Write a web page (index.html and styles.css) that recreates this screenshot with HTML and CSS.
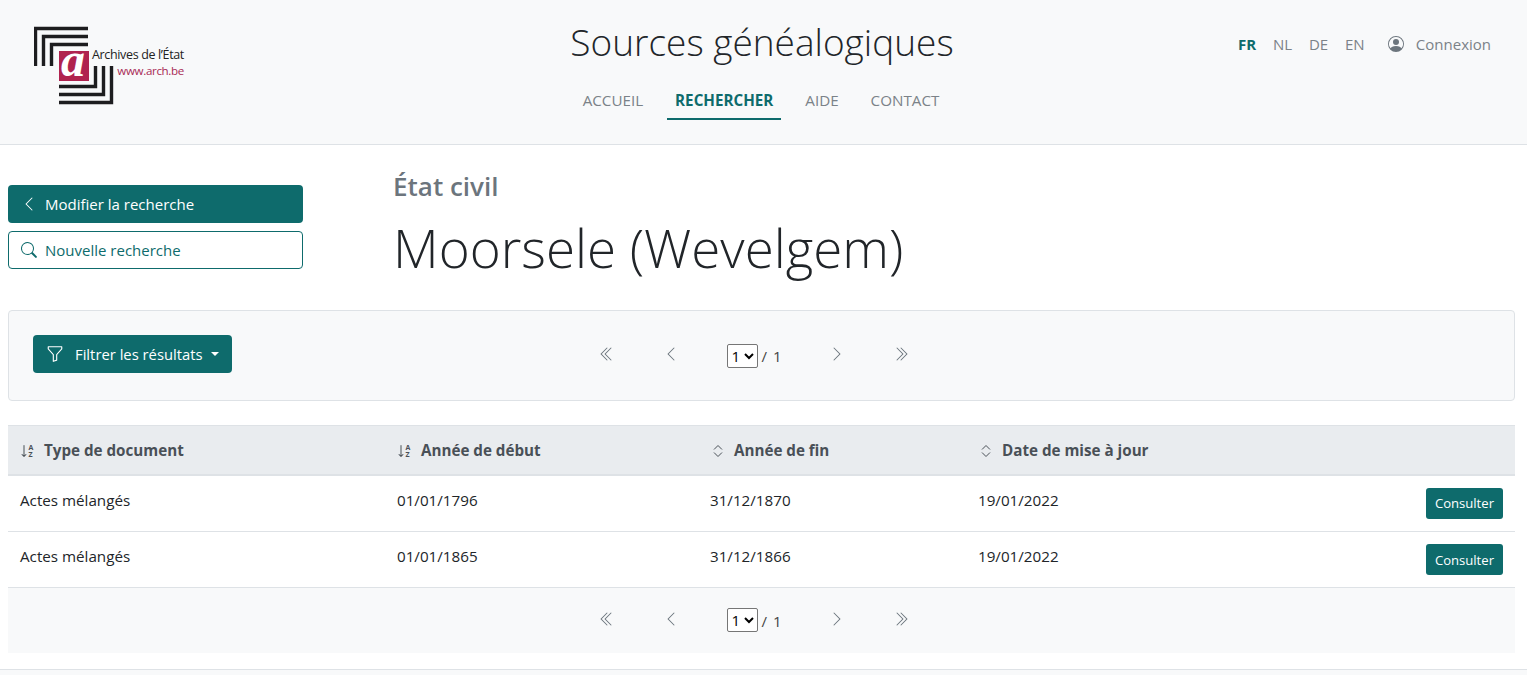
FILE: index.html
```html
<!DOCTYPE html>
<html lang="fr">
<head>
<meta charset="utf-8">
<title>Sources généalogiques</title>
<link rel="stylesheet" href="styles.css">
</head>
<body>
<header class="site-header">
  <div class="logo">
    <svg class="logo-mark" width="90" height="80" viewBox="0 0 90 80">
      <g fill="none" stroke="#1d1d1f" stroke-width="3.4">
        <path d="M1.5 40V2.5H54"/>
        <path d="M9.5 40V10.5H54"/>
        <path d="M17.5 40V18.5H54"/>
        <path d="M25 60.5H61.5V40"/>
        <path d="M25 68.5H69.5V40"/>
        <path d="M25 76.5H77.5V40"/>
      </g>
      <rect x="25" y="25" width="30" height="30" fill="#b0234f"/>
      <text x="39" y="50" class="logo-a">a</text>
    </svg>
    <div class="logo-text">
      <span class="logo-name">Archives de l’État</span>
      <span class="logo-url">www.arch.be</span>
    </div>
  </div>
  <div class="header-center">
    <h1 class="site-title">Sources généalogiques</h1>
    <nav class="main-nav">
      <a class="nav-item">ACCUEIL</a>
      <a class="nav-item active">RECHERCHER</a>
      <a class="nav-item">AIDE</a>
      <a class="nav-item">CONTACT</a>
    </nav>
  </div>
  <div class="header-right">
    <a class="lang active">FR</a>
    <a class="lang">NL</a>
    <a class="lang">DE</a>
    <a class="lang">EN</a>
    <a class="login">
      <svg width="16" height="16" viewBox="0 0 16 16" fill="#6c757d"><path d="M11 6a3 3 0 1 1-6 0 3 3 0 0 1 6 0z"/><path fill-rule="evenodd" d="M0 8a8 8 0 1 1 16 0A8 8 0 0 1 0 8zm8-7a7 7 0 0 0-5.468 11.37C3.242 11.226 4.805 10 8 10s4.757 1.225 5.468 2.37A7 7 0 0 0 8 1z"/></svg>
      Connexion
    </a>
  </div>
</header>

<main class="content">
  <section class="intro">
    <div class="side-actions">
      <a class="btn btn-fill btn-wide">
        <svg width="16" height="16" viewBox="0 0 16 16" fill="currentColor"><path fill-rule="evenodd" d="M11.354 1.646a.5.5 0 0 1 0 .708L5.707 8l5.647 5.646a.5.5 0 0 1-.708.708l-6-6a.5.5 0 0 1 0-.708l6-6a.5.5 0 0 1 .708 0z"/></svg>
        Modifier la recherche
      </a>
      <a class="btn btn-line btn-wide">
        <svg width="16" height="16" viewBox="0 0 16 16" fill="currentColor"><path d="M11.742 10.344a6.5 6.5 0 1 0-1.397 1.398l3.85 3.85a1 1 0 0 0 1.415-1.414l-3.85-3.85zM12 6.5a5.5 5.5 0 1 1-11 0 5.5 5.5 0 0 1 11 0z"/></svg>
        Nouvelle recherche
      </a>
    </div>
    <div class="heading">
      <h2 class="kicker">État civil</h2>
      <h3 class="place">Moorsele (Wevelgem)</h3>
    </div>
  </section>

  <section class="toolbar">
    <a class="btn btn-fill btn-filter">
      <svg width="18" height="18" viewBox="0 0 16 16" fill="currentColor"><path d="M1.5 1.5A.5.5 0 0 1 2 1h12a.5.5 0 0 1 .5.5v2a.5.5 0 0 1-.128.334L10 8.692V13.5a.5.5 0 0 1-.342.474l-3 1A.5.5 0 0 1 6 14.5V8.692L1.628 3.834A.5.5 0 0 1 1.5 3.5v-2zm1 .5v1.308l4.372 4.858A.5.5 0 0 1 7 8.5v5.306l2-.666V8.5a.5.5 0 0 1 .128-.334L13.5 3.308V2h-11z"/></svg>
      <span>Filtrer les résultats</span>
      <i class="caret"></i>
    </a>
    <div class="pager">
      <a class="pg"><svg width="16" height="16" viewBox="0 0 16 16" fill="currentColor"><path fill-rule="evenodd" d="M8.354 1.646a.5.5 0 0 1 0 .708L2.707 8l5.647 5.646a.5.5 0 0 1-.708.708l-6-6a.5.5 0 0 1 0-.708l6-6a.5.5 0 0 1 .708 0z"/><path fill-rule="evenodd" d="M12.354 1.646a.5.5 0 0 1 0 .708L6.707 8l5.647 5.646a.5.5 0 0 1-.708.708l-6-6a.5.5 0 0 1 0-.708l6-6a.5.5 0 0 1 .708 0z"/></svg></a>
      <a class="pg"><svg width="16" height="16" viewBox="0 0 16 16" fill="currentColor"><path fill-rule="evenodd" d="M11.354 1.646a.5.5 0 0 1 0 .708L5.707 8l5.647 5.646a.5.5 0 0 1-.708.708l-6-6a.5.5 0 0 1 0-.708l6-6a.5.5 0 0 1 .708 0z"/></svg></a>
      <div class="pg-count"><select class="pg-select"><option>1</option></select><span>/ 1</span></div>
      <a class="pg"><svg width="16" height="16" viewBox="0 0 16 16" fill="currentColor"><path fill-rule="evenodd" d="M4.646 1.646a.5.5 0 0 1 .708 0l6 6a.5.5 0 0 1 0 .708l-6 6a.5.5 0 0 1-.708-.708L10.293 8 4.646 2.354a.5.5 0 0 1 0-.708z"/></svg></a>
      <a class="pg"><svg width="16" height="16" viewBox="0 0 16 16" fill="currentColor"><path fill-rule="evenodd" d="M3.646 1.646a.5.5 0 0 1 .708 0l6 6a.5.5 0 0 1 0 .708l-6 6a.5.5 0 0 1-.708-.708L9.293 8 3.646 2.354a.5.5 0 0 1 0-.708z"/><path fill-rule="evenodd" d="M7.646 1.646a.5.5 0 0 1 .708 0l6 6a.5.5 0 0 1 0 .708l-6 6a.5.5 0 0 1-.708-.708L13.293 8 7.646 2.354a.5.5 0 0 1 0-.708z"/></svg></a>
    </div>
  </section>

  <table class="results">
    <thead>
      <tr>
        <th class="col-type"><span class="th-in"><svg width="16" height="16" viewBox="0 0 16 16" fill="currentColor"><path d="M4.5 2.5a.5.5 0 0 0-1 0v9.793l-1.146-1.147a.5.5 0 0 0-.708.708l2 1.999a.5.5 0 0 0 .708 0l2-2a.5.5 0 0 0-.708-.707L4.5 12.293V2.5z"/><text x="8.4" y="6.8" class="sort-t">A</text><text x="8.4" y="14" class="sort-t">Z</text></svg>Type de document</span></th>
        <th class="col-start"><span class="th-in"><svg width="16" height="16" viewBox="0 0 16 16" fill="currentColor"><path d="M4.5 2.5a.5.5 0 0 0-1 0v9.793l-1.146-1.147a.5.5 0 0 0-.708.708l2 1.999a.5.5 0 0 0 .708 0l2-2a.5.5 0 0 0-.708-.707L4.5 12.293V2.5z"/><text x="8.4" y="6.8" class="sort-t">A</text><text x="8.4" y="14" class="sort-t">Z</text></svg>Année de début</span></th>
        <th class="col-end"><span class="th-in"><svg width="16" height="16" viewBox="0 0 16 16" fill="none" stroke="currentColor" stroke-width="1"><path d="M4 6.5 8 2.5l4 4M4 9.5l4 4 4-4"/></svg>Année de fin</span></th>
        <th class="col-date"><span class="th-in"><svg width="16" height="16" viewBox="0 0 16 16" fill="none" stroke="currentColor" stroke-width="1"><path d="M4 6.5 8 2.5l4 4M4 9.5l4 4 4-4"/></svg>Date de mise à jour</span></th>
        <th></th>
      </tr>
    </thead>
    <tbody>
      <tr>
        <td>Actes mélangés</td><td>01/01/1796</td><td>31/12/1870</td><td>19/01/2022</td>
        <td class="cell-action"><a class="btn btn-fill btn-small">Consulter</a></td>
      </tr>
      <tr>
        <td>Actes mélangés</td><td>01/01/1865</td><td>31/12/1866</td><td>19/01/2022</td>
        <td class="cell-action"><a class="btn btn-fill btn-small">Consulter</a></td>
      </tr>
    </tbody>
  </table>

  <section class="bottom-bar">
    <div class="pager">
      <a class="pg"><svg width="16" height="16" viewBox="0 0 16 16" fill="currentColor"><path fill-rule="evenodd" d="M8.354 1.646a.5.5 0 0 1 0 .708L2.707 8l5.647 5.646a.5.5 0 0 1-.708.708l-6-6a.5.5 0 0 1 0-.708l6-6a.5.5 0 0 1 .708 0z"/><path fill-rule="evenodd" d="M12.354 1.646a.5.5 0 0 1 0 .708L6.707 8l5.647 5.646a.5.5 0 0 1-.708.708l-6-6a.5.5 0 0 1 0-.708l6-6a.5.5 0 0 1 .708 0z"/></svg></a>
      <a class="pg"><svg width="16" height="16" viewBox="0 0 16 16" fill="currentColor"><path fill-rule="evenodd" d="M11.354 1.646a.5.5 0 0 1 0 .708L5.707 8l5.647 5.646a.5.5 0 0 1-.708.708l-6-6a.5.5 0 0 1 0-.708l6-6a.5.5 0 0 1 .708 0z"/></svg></a>
      <div class="pg-count"><select class="pg-select"><option>1</option></select><span>/ 1</span></div>
      <a class="pg"><svg width="16" height="16" viewBox="0 0 16 16" fill="currentColor"><path fill-rule="evenodd" d="M4.646 1.646a.5.5 0 0 1 .708 0l6 6a.5.5 0 0 1 0 .708l-6 6a.5.5 0 0 1-.708-.708L10.293 8 4.646 2.354a.5.5 0 0 1 0-.708z"/></svg></a>
      <a class="pg"><svg width="16" height="16" viewBox="0 0 16 16" fill="currentColor"><path fill-rule="evenodd" d="M3.646 1.646a.5.5 0 0 1 .708 0l6 6a.5.5 0 0 1 0 .708l-6 6a.5.5 0 0 1-.708-.708L9.293 8 3.646 2.354a.5.5 0 0 1 0-.708z"/><path fill-rule="evenodd" d="M7.646 1.646a.5.5 0 0 1 .708 0l6 6a.5.5 0 0 1 0 .708l-6 6a.5.5 0 0 1-.708-.708L13.293 8 7.646 2.354a.5.5 0 0 1 0-.708z"/></svg></a>
    </div>
  </section>
</main>
<div class="footer-line"></div>
</body>
</html>
```
FILE: styles.css
```css
* { box-sizing: border-box; }
html, body { margin: 0; padding: 0; background: #fff; height: 675px; overflow: hidden; }
body { font-family: "Open Sans", "Noto Sans", sans-serif; font-size: 15px; color: #212529; line-height: 1.5; }
a { text-decoration: none; color: inherit; }
h1, h2, h3 { margin: 0; font-weight: 300; }

.site-header { height: 145px; background: #f8f9fa; border-bottom: 1px solid #dee2e6; display: grid; grid-template-columns: 1fr auto 1fr; padding: 0 36px 0 33px; }
.logo { display: flex; align-items: flex-start; padding-top: 26px; }
.logo-mark { flex: none; margin: 0 -32px 0 1px; }
.logo-a { font-family: "Liberation Serif", serif; font-style: italic; font-weight: 700; font-size: 48px; fill: #fff; text-anchor: middle; }
.logo-text { display: flex; flex-direction: column; align-items: flex-end; margin-top: 21px; line-height: 16.4px; }
.logo-name { color: #222; font-size: 12.5px; letter-spacing: -0.35px; white-space: nowrap; }
.logo-url { color: #a82a55; font-size: 11.6px; letter-spacing: -0.35px; }

.header-center { display: flex; flex-direction: column; align-items: center; padding-top: 14px; }
.site-title { font-size: 37px; line-height: 55px; color: #212529; white-space: nowrap; }
.main-nav { display: flex; margin: 12px 2px 0 0; }
.nav-item { padding: 8px 8px 0; margin: 0 8px; font-size: 15.2px; line-height: 22px; height: 39px; color: #7b8288; }
.nav-item.active { color: #0e6b6c; font-weight: 700; border-bottom: 2px solid #0e6b6c; }

.header-right { display: flex; justify-content: flex-end; align-items: flex-start; padding-top: 33px; font-size: 15px; line-height: 22px; color: #7b8288; }
.lang { margin-right: 16.8px; }
.lang.active { color: #0e6b6c; font-weight: 700; }
.login { display: flex; align-items: center; gap: 12px; margin-left: 6.5px; }

.content { padding: 0 12px 0 8px; }
.intro { display: flex; height: 165px; }
.side-actions { width: 295px; padding-top: 40px; display: flex; flex-direction: column; gap: 8px; flex: none; }
.btn { display: flex; align-items: center; border-radius: 4px; font-size: 15px; white-space: nowrap; }
.btn-fill { background: #0e6b6c; color: #fff; }
.btn-line { border: 1px solid #0e6b6c; color: #0e6b6c; }
.btn-wide { height: 38px; padding: 0 12px 0 13px; gap: 8px; }
.btn-line.btn-wide { padding-left: 12px; }
.heading { margin-left: 90px; padding-top: 22px; }
.kicker { font-size: 26px; line-height: 39px; font-weight: 600; color: #6c757d; }
.place { font-size: 52.9px; line-height: 72px; color: #212529; margin-top: 5px; white-space: nowrap; }

.toolbar { position: relative; height: 91px; background: #f8f9fa; border: 1px solid #dee2e6; border-radius: 4px; display: flex; align-items: center; justify-content: center; }
.btn-filter { position: absolute; left: 24px; top: 24px; height: 38px; width: 199px; padding: 0 0 0 12.5px; }
.btn-filter span { margin-left: 11.5px; font-size: 14.8px; }
.caret { width: 0; height: 0; margin-left: 8px; border-top: 4px solid #fff; border-left: 4px solid transparent; border-right: 4px solid transparent; }
.pager { display: flex; align-items: center; color: #6c757d; margin-right: 15px; }
.pg { width: 16px; height: 16px; display: block; margin-bottom: 4px; }
.pg svg { display: block; }
.pg:nth-child(1) { margin-right: 48px; }
.pg:nth-child(2) { margin-right: 48px; }
.pg:nth-child(4) { margin-right: 48px; margin-left: 48px; }
.pg-count { display: flex; align-items: center; gap: 4px; color: #444; font-size: 15px; word-spacing: 2px; }
.pg-count span { padding-top: 2px; }
.pg-select { width: 31px; height: 24px; font-family: "Open Sans", sans-serif; font-size: 15px; padding: 0; background: #fff; border: 1px solid #767676; border-radius: 2px; color: #000; }

.results { width: 1507px; margin-top: 24px; border-collapse: collapse; table-layout: fixed; font-size: 15.2px; }
.results th { height: 49px; background: #e9ecef; border-bottom: 2px solid #dee2e6; border-top: 1px solid #dee2e6; text-align: left; font-weight: 700; color: #495057; padding: 2px 12px 0; }
.th-in { display: flex; align-items: center; gap: 8px; white-space: nowrap; }
.sort-t { font-family: "Open Sans", sans-serif; font-size: 7px; font-weight: 700; }
.col-type { width: 377px; }
.col-start { width: 313px; }
.col-end { width: 268px; }
.col-date { width: 300px; }
.results td { height: 56px; padding: 0 12px 7px; border-bottom: 1px solid #dee2e6; vertical-align: middle; }
.results tbody tr:first-child td { height: 57px; padding-bottom: 5px; }
.results tbody tr:first-child .cell-action { padding-bottom: 0; }
.results .cell-action { padding-bottom: 0; text-align: right; }
.btn-small { display: inline-flex; height: 31px; padding: 2px 9px 0; font-size: 13.1px; border-radius: 3px; }

.bottom-bar { height: 65px; background: #f8f9fa; display: flex; justify-content: center; align-items: flex-start; padding-top: 20px; }
.bottom-bar .pg { margin-bottom: 2px; }
.footer-line { margin-top: 16px; border-top: 1px solid #dee2e6; height: 6px; background: #f8f9fa; }
```
